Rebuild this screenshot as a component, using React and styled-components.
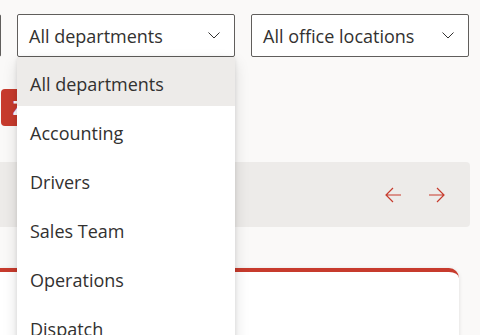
import styled, { createGlobalStyle } from "styled-components";

const GlobalStyle = createGlobalStyle`
  body {
    margin: 0;
    background: #faf9f8;
    font-family: "Open Sans", "Noto Sans", sans-serif;
    color: #323130;
    overflow: hidden;
  }
`;

const departments = ["All departments", "Accounting", "Drivers", "Sales Team", "Operations", "Dispatch"];

function Chevron() {
  return (
    <svg width="12" height="7" viewBox="0 0 12 7">
      <path d="M0.5 0.5 L6 6 L11.5 0.5" fill="none" stroke="#323130" strokeWidth="1" />
    </svg>
  );
}

function Arrow({ dir }) {
  const d = dir === "left" ? "M16 8 H1 M8 1 L1 8 L8 15" : "M0 8 H15 M8 1 L15 8 L8 15";
  return (
    <svg width="16" height="16" viewBox="0 0 16 16">
      <path d={d} fill="none" stroke="#c73b2d" strokeWidth="1.2" />
    </svg>
  );
}

export default function App() {
  return (
    <Page>
      <GlobalStyle />
      <FilterRow>
        <Stub />
        <SelectWrap $width={218}>
          <SelectBox>
            All departments
            <Chevron />
          </SelectBox>
          <Menu>
            {departments.map((d, i) => (
              <MenuItem key={d} $active={i === 0}>{d}</MenuItem>
            ))}
          </Menu>
        </SelectWrap>
        <SelectWrap $width={218}>
          <SelectBox>
            All office locations
            <Chevron />
          </SelectBox>
        </SelectWrap>
      </FilterRow>

      <Badge>Z</Badge>

      <Band>
        <NavButton><Arrow dir="left" /></NavButton>
        <NavButton><Arrow dir="right" /></NavButton>
      </Band>

      <Card />
    </Page>
  );
}

const Page = styled.div`
  width: 480px;
  height: 335px;
  padding-top: 14px;
  box-sizing: border-box;
  overflow: hidden;
`;

const FilterRow = styled.div`
  display: flex;
  align-items: flex-start;
  gap: 16px;
  position: relative;
  z-index: 5;
`;

const Stub = styled.div`
  width: 200px;
  height: 43px;
  margin-left: -199px;
  box-sizing: border-box;
  border: 1px solid #605e5c;
  border-radius: 2px;
  background: #fff;
`;

const SelectWrap = styled.div`
  position: relative;
  width: ${(p) => p.$width}px;
`;

const SelectBox = styled.div`
  height: 43px;
  box-sizing: border-box;
  border: 1px solid #605e5c;
  border-radius: 2px;
  background: #fff;
  padding: 0 14px 0 11px;
  display: flex;
  align-items: center;
  justify-content: space-between;
  font-size: 18px;
  line-height: 1;
`;

const Menu = styled.div`
  position: absolute;
  top: 100%;
  left: 0;
  width: 100%;
  background: #fff;
  box-shadow: 0 6px 14px rgba(0, 0, 0, 0.13), 0 1px 4px rgba(0, 0, 0, 0.1);
`;

const MenuItem = styled.div`
  height: 49px;
  box-sizing: border-box;
  padding: 5px 0 0 13px;
  display: flex;
  align-items: center;
  font-size: 18px;
  background: ${(p) => (p.$active ? "#edebe9" : "#fff")};
`;

const Badge = styled.div`
  margin-top: 32px;
  margin-left: 1px;
  width: 48px;
  height: 37px;
  box-sizing: border-box;
  padding-left: 12px;
  border-radius: 4px;
  background: #c73b2d;
  color: #fff;
  font-size: 20px;
  font-weight: 700;
  display: flex;
  align-items: center;
`;

const Band = styled.div`
  margin-top: 36px;
  width: 470px;
  height: 65px;
  background: #edebe9;
  border-radius: 0 4px 4px 0;
  display: flex;
  align-items: center;
  justify-content: flex-end;
  gap: 28px;
  padding-right: 25px;
  box-sizing: border-box;
`;

const NavButton = styled.div`
  width: 16px;
  height: 16px;
  display: flex;
`;

const Card = styled.div`
  margin-top: 41px;
  width: 459px;
  height: 120px;
  background: #fff;
  border-top: 4px solid #c73b2d;
  border-radius: 0 10px 0 0;
  box-shadow: 0 1px 4px rgba(0, 0, 0, 0.12);
`;
